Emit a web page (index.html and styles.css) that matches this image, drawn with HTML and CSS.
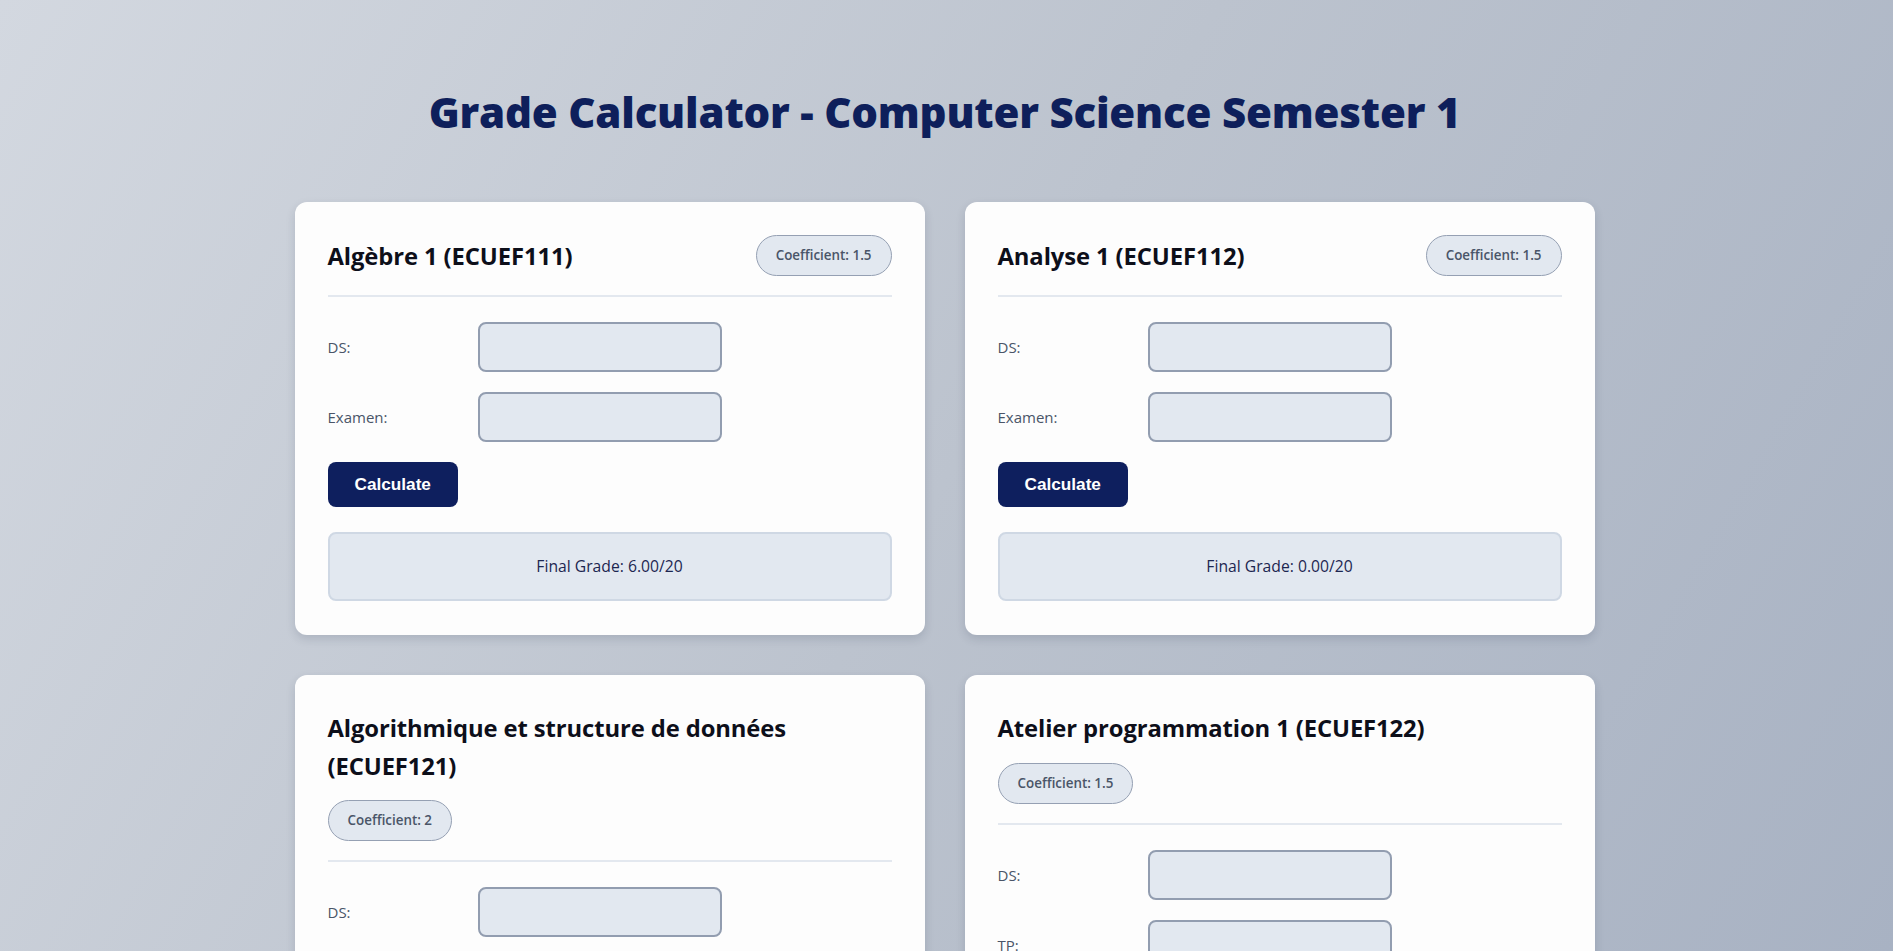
FILE: index.html
```html
<!DOCTYPE html>
<html lang="en">
<head>
<meta charset="utf-8">
<title>Grade Calculator</title>
<link rel="stylesheet" href="styles.css">
</head>
<body>
<div class="container">
  <h1 class="page-title">Grade Calculator - Computer Science Semester 1</h1>
  <div class="grid">
    <section class="card">
      <div class="card-header">
        <h2 class="card-title">Algèbre 1 (ECUEF111)</h2>
        <span class="badge">Coefficient: 1.5</span>
      </div>
      <div class="field"><label class="field-label">DS:</label><input class="field-input" type="number"></div>
      <div class="field"><label class="field-label">Examen:</label><input class="field-input" type="number"></div>
      <button class="btn">Calculate</button>
      <div class="result">Final Grade: 6.00/20</div>
    </section>
    <section class="card">
      <div class="card-header">
        <h2 class="card-title">Analyse 1 (ECUEF112)</h2>
        <span class="badge">Coefficient: 1.5</span>
      </div>
      <div class="field"><label class="field-label">DS:</label><input class="field-input" type="number"></div>
      <div class="field"><label class="field-label">Examen:</label><input class="field-input" type="number"></div>
      <button class="btn">Calculate</button>
      <div class="result">Final Grade: 0.00/20</div>
    </section>
    <section class="card">
      <div class="card-header">
        <h2 class="card-title">Algorithmique et structure de données (ECUEF121)</h2>
        <span class="badge">Coefficient: 2</span>
      </div>
      <div class="field"><label class="field-label">DS:</label><input class="field-input" type="number"></div>
      <div class="field"><label class="field-label">Examen:</label><input class="field-input" type="number"></div>
      <button class="btn">Calculate</button>
      <div class="result">Final Grade: 0.00/20</div>
    </section>
    <section class="card">
      <div class="card-header">
        <h2 class="card-title">Atelier programmation 1 (ECUEF122)</h2>
        <span class="badge">Coefficient: 1.5</span>
      </div>
      <div class="field"><label class="field-label">DS:</label><input class="field-input" type="number"></div>
      <div class="field"><label class="field-label">TP:</label><input class="field-input" type="number"></div>
      <div class="field"><label class="field-label">Examen:</label><input class="field-input" type="number"></div>
      <button class="btn">Calculate</button>
      <div class="result">Final Grade: 0.00/20</div>
    </section>
  </div>
</div>
</body>
</html>
```

FILE: styles.css
```css
* { box-sizing: border-box; }

html, body {
  margin: 0;
  padding: 0;
}

body {
  min-height: 100vh;
  font-family: "Open Sans", "Noto Sans", sans-serif;
  line-height: 1.6;
  background: linear-gradient(120deg, #d3d8e0 0%, #bcc3ce 50%, #a8b2c3 100%);
  background-attachment: fixed;
}

.container {
  max-width: 1304px;
  margin: 0 auto;
  padding: 82px 4px 40px 0;
}

.page-title {
  margin: 0 0 60px;
  text-align: center;
  font-size: 42px;
  line-height: 60px;
  font-weight: 800;
  color: #0e1f5b;
  letter-spacing: -0.2px;
}

.grid {
  display: grid;
  grid-template-columns: 1fr 1fr;
  gap: 40px;
}

.card {
  background: #fdfdfd;
  border-radius: 12px;
  padding: 33px 33px 34px;
  box-shadow: 0 4px 10px rgba(30, 40, 70, 0.15);
}

.card-header {
  display: flex;
  flex-wrap: wrap;
  justify-content: space-between;
  align-items: center;
  gap: 15px 16px;
  padding-bottom: 19px;
  border-bottom: 2px solid #e3e8ef;
  margin-bottom: 25px;
}

.card-title {
  margin: 0;
  padding-top: 2px;
  font-size: 23.8px;
  line-height: 37.5px;
  font-weight: 700;
  color: #0d0f1a;
  letter-spacing: -0.1px;
}

.badge {
  display: inline-block;
  height: 41px;
  padding: 0 19px;
  line-height: 39px;
  border: 1px solid #95a0b3;
  border-radius: 21px;
  background: #e2e8f0;
  color: #4a5568;
  font-size: 13.4px;
  font-weight: 600;
  white-space: nowrap;
}

.field {
  display: flex;
  align-items: center;
  margin-bottom: 20px;
}

.field-label {
  width: 150px;
  flex: 0 0 150px;
  font-size: 15px;
  color: #4a5568;
}

.field-input {
  width: 244px;
  height: 50px;
  border: 2px solid #929db0;
  border-radius: 8px;
  background: #e2e8f0;
  font-family: inherit;
  font-size: 16px;
  padding: 0 12px;
}

.btn {
  display: block;
  height: 45px;
  padding: 0 27px;
  border: none;
  border-radius: 8px;
  background: #0e1f5e;
  color: #ffffff;
  font-family: "Liberation Sans", Arial, sans-serif;
  font-size: 17.2px;
  font-weight: 700;
  margin-bottom: 25px;
  cursor: pointer;
}

.result {
  height: 69px;
  display: flex;
  align-items: center;
  justify-content: center;
  background: #e2e8f0;
  border: 2px solid #cfd8e4;
  border-radius: 8px;
  color: #1c2650;
  font-size: 15.7px;
  font-weight: 500;
}
```
